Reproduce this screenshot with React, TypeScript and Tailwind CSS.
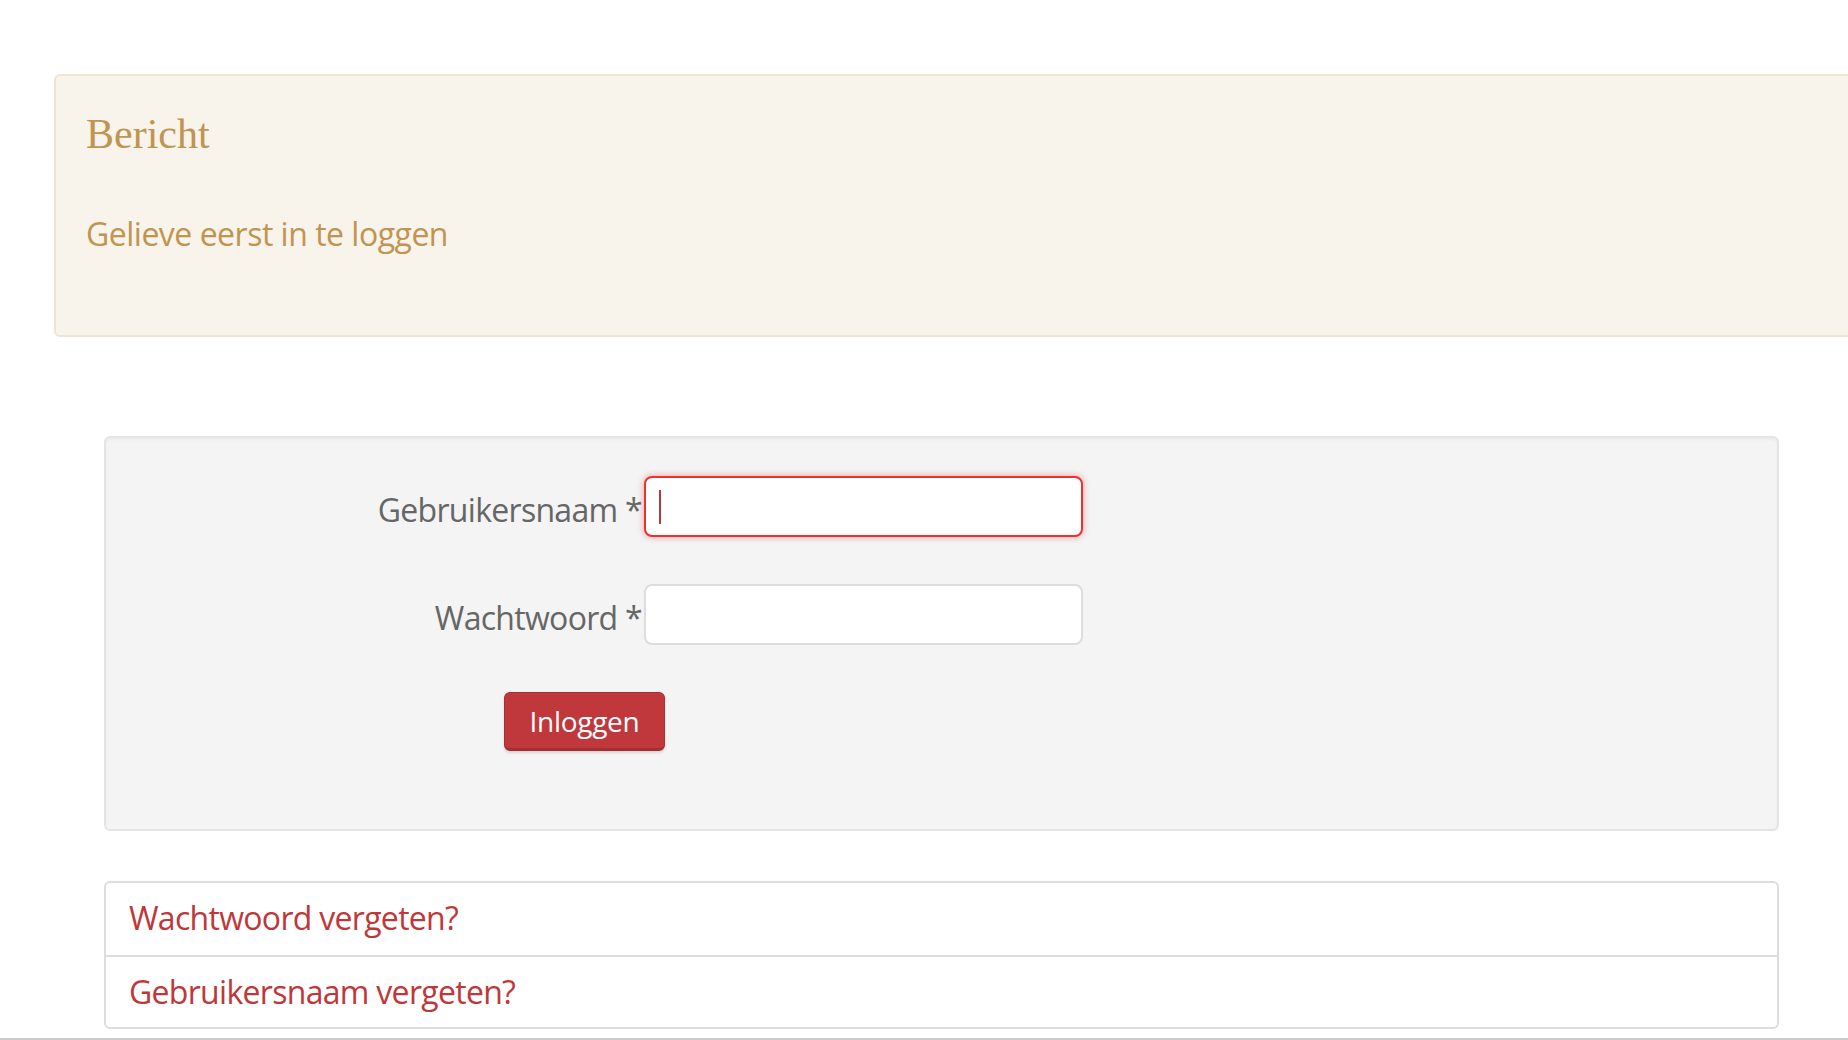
import React from 'react';

const GOLD = 'text-[#c09550]';

function MessageBox() {
  return (
    <div className="ml-[54px] mr-[-20px] rounded-[6px] border-2 border-[#efe5d3] bg-[#f8f3eb] pl-[30px] pt-[37px] pb-[81px]">
      <h2 className={`font-['Liberation_Serif',serif] text-[42px] leading-[42px] ${GOLD}`}>Bericht</h2>
      <p className={`mt-[59px] text-[32px] leading-[40px] tracking-[-0.5px] ${GOLD}`}>Gelieve eerst in te loggen</p>
    </div>
  );
}

function Field({ label, focused }: { label: string; focused?: boolean }) {
  return (
    <div className="flex items-start">
      <label className="h-[61px] w-[538px] pr-[2px] text-right text-[32px] leading-[68px] tracking-[-0.7px] text-[#666666]">
        {label} *
      </label>
      <div
        className={`flex h-[61px] w-[439px] items-center rounded-[8px] border-2 bg-white pl-[13px] ${
          focused ? 'border-[#e93330] shadow-[0_0_7px_rgba(233,51,48,0.45)]' : 'border-[#dddddd]'
        }`}
      >
        {focused && <span className="h-[34px] w-[2px] bg-[#b33a3a]" />}
      </div>
    </div>
  );
}

function LoginForm() {
  return (
    <div className="ml-[104px] mr-[69px] mt-[99px] rounded-[6px] border-2 border-[#e4e4e4] bg-[#f4f4f4] pt-[38px] pb-[78px] shadow-[inset_0_2px_2px_rgba(0,0,0,0.04)]">
      <div className="flex flex-col gap-[47px]">
        <Field label="Gebruikersnaam" focused />
        <Field label="Wachtwoord" />
        <div className="pl-[398px]">
          <button
            type="button"
            className="h-[59px] w-[161px] rounded-[6px] border border-[#a92e31] border-b-[3px] bg-[#c0383b] text-[28px] leading-none tracking-[-0.3px] text-white shadow-[0_2px_3px_rgba(0,0,0,0.12)]"
          >
            Inloggen
          </button>
        </div>
      </div>
    </div>
  );
}

function HelpLinks() {
  const links = ['Wachtwoord vergeten?', 'Gebruikersnaam vergeten?'];
  return (
    <div className="ml-[104px] mr-[69px] mt-[50px] rounded-[6px] border-2 border-[#dddddd] bg-white">
      {links.map((text, i) => (
        <a
          key={text}
          href="#"
          className={`block h-[72px] pl-[23px] pt-[15px] text-[32px] leading-[40px] tracking-[-0.7px] text-[#c0373a] ${
            i > 0 ? 'border-t-2 border-[#dddddd]' : ''
          }`}
        >
          {text}
        </a>
      ))}
    </div>
  );
}

export default function App() {
  return (
    <div className="h-[1040px] overflow-hidden bg-white font-['Open_Sans',sans-serif]">
      <div className="pt-[74px]">
        <MessageBox />
        <LoginForm />
        <HelpLinks />
        <div className="mt-[9px] h-[2px] bg-[#cccccc]" />
      </div>
    </div>
  );
}
